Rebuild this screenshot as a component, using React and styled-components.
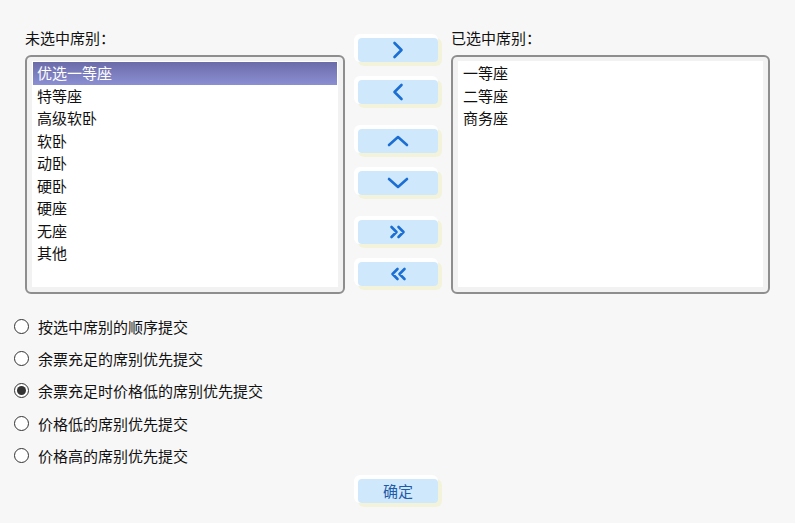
import React, { useState } from 'react';
import styled, { createGlobalStyle } from 'styled-components';

const GlobalStyle = createGlobalStyle`
  html, body {
    margin: 0;
    padding: 0;
    background: #f7f7f7;
  }
  body {
    font-family: "Noto Sans CJK SC", "Noto Sans", sans-serif;
    font-size: 15px;
    color: #111;
  }
`;

const unselected = ['优选一等座', '特等座', '高级软卧', '软卧', '动卧', '硬卧', '硬座', '无座', '其他'];
const chosen = ['一等座', '二等座', '商务座'];
const orders = [
  '按选中席别的顺序提交',
  '余票充足的席别优先提交',
  '余票充足时价格低的席别优先提交',
  '价格低的席别优先提交',
  '价格高的席别优先提交',
];

const Page = styled.div`
  width: 795px;
  height: 523px;
  box-sizing: border-box;
  padding: 28px 25px 0 14px;
  display: flex;
  flex-direction: column;
`;

const Top = styled.div`
  display: flex;
  align-items: flex-start;
  padding-left: 11px;
`;

const Column = styled.div`
  width: ${p => p.width}px;
  display: flex;
  flex-direction: column;
`;

const Label = styled.div`
  height: 20px;
  line-height: 20px;
  margin-bottom: 7px;
`;

const ListBox = styled.div`
  height: 239px;
  box-sizing: border-box;
  border: 2px solid #8e8e8e;
  border-radius: 6px;
  background: #f2f2f2;
  padding: 4px 5px 5px 5px;
  display: flex;
`;

const ListInner = styled.div`
  flex: 1;
  background: #fff;
  padding-top: 1px;
`;

const Item = styled.div`
  height: 22.5px;
  line-height: 22.5px;
  padding-left: 4px;
  margin: 0 1px;
  color: ${p => (p.active ? '#fff' : '#111')};
  background: ${p => (p.active ? 'linear-gradient(#6b6ba9, #8b8fd3)' : 'transparent')};
  white-space: nowrap;
`;

const Buttons = styled.div`
  width: 106px;
  display: flex;
  flex-direction: column;
  align-items: center;
  gap: 25px;
  padding-top: 10px;
`;

const Group = styled.div`
  display: flex;
  flex-direction: column;
  gap: 18px;
`;

const Btn = styled.button`
  width: 80px;
  height: 24px;
  border: none;
  border-radius: 4px;
  background: #cfe8fc;
  color: #1e5ba8;
  font-family: inherit;
  font-size: 15px;
  padding: 0;
  display: flex;
  align-items: center;
  justify-content: center;
  box-shadow: -2px -2px 0 2px #fff, 2px 2px 0 2px #f3f3dc;
  cursor: pointer;
`;

const Radios = styled.div`
  margin-top: 16px;
  display: flex;
  flex-direction: column;
`;

const RadioRow = styled.label`
  height: 32.4px;
  display: flex;
  align-items: center;
  gap: 9px;
  cursor: pointer;
`;

const Circle = styled.span`
  width: 15px;
  height: 15px;
  box-sizing: border-box;
  border: 1.2px solid #333;
  border-radius: 50%;
  background: #fff;
  display: flex;
  align-items: center;
  justify-content: center;
  &::after {
    content: '';
    width: 9px;
    height: 9px;
    border-radius: 50%;
    background: ${p => (p.checked ? '#333' : 'transparent')};
  }
`;

const Footer = styled.div`
  margin-top: 7px;
  display: flex;
  justify-content: center;
  padding-left: 12px;
`;

const Chevron = ({ d, w, h }) => (
  <svg width={w} height={h} viewBox={`0 0 ${w} ${h}`} fill="none" stroke="#1b6fd4" strokeWidth="2.6" strokeLinecap="round" strokeLinejoin="round">
    <path d={d} />
  </svg>
);

export default function App() {
  const [order, setOrder] = useState(2);

  return (
    <>
      <GlobalStyle />
      <Page>
        <Top>
          <Column width={320}>
            <Label>未选中席别：</Label>
            <ListBox>
              <ListInner>
                {unselected.map((s, i) => (
                  <Item key={s} active={i === 0}>{s}</Item>
                ))}
              </ListInner>
            </ListBox>
          </Column>
          <Buttons>
            <Group>
              <Btn><Chevron w={12} h={18} d="M2.5 2 L9.5 9 L2.5 16" /></Btn>
              <Btn><Chevron w={12} h={18} d="M9.5 2 L2.5 9 L9.5 16" /></Btn>
            </Group>
            <Group>
              <Btn><Chevron w={22} h={12} d="M2 10 L11 2 L20 10" /></Btn>
              <Btn><Chevron w={22} h={12} d="M2 2 L11 10 L20 2" /></Btn>
            </Group>
            <Group>
              <Btn><Chevron w={18} h={14} d="M2.5 2 L7.5 7 L2.5 12 M9.5 2 L14.5 7 L9.5 12" /></Btn>
              <Btn><Chevron w={18} h={14} d="M8.5 2 L3.5 7 L8.5 12 M15.5 2 L10.5 7 L15.5 12" /></Btn>
            </Group>
          </Buttons>
          <Column width={319}>
            <Label>已选中席别：</Label>
            <ListBox>
              <ListInner>
                {chosen.map(s => (
                  <Item key={s}>{s}</Item>
                ))}
              </ListInner>
            </ListBox>
          </Column>
        </Top>
        <Radios>
          {orders.map((o, i) => (
            <RadioRow key={o} onClick={() => setOrder(i)}>
              <Circle checked={order === i} />
              {o}
            </RadioRow>
          ))}
        </Radios>
        <Footer>
          <Btn>确定</Btn>
        </Footer>
      </Page>
    </>
  );
}
